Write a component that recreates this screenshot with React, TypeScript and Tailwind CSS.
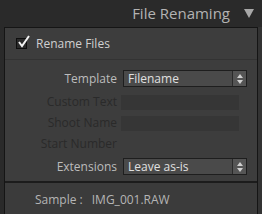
export default function App() {
  const font = { fontFamily: '"Open Sans", "Liberation Sans", sans-serif' }
  return (
    <div className="w-[262px] h-[214px] overflow-hidden bg-[#2a2a2a] flex flex-col" style={font}>
      <div className="h-[27px] flex items-center justify-end pr-[8px] shrink-0">
        <span className="text-[15px] text-[#b3b3b3] leading-none">File Renaming</span>
        <svg width="10" height="9" viewBox="0 0 10 9" className="ml-[14px]">
          <path d="M0 0 H10 L5 9 Z" fill="#a8a8a8" />
        </svg>
      </div>
      <div className="flex flex-1">
        <div className="ml-[4px] w-[254px] border-l border-t border-r border-[#151515] bg-[#3d3d3d] flex flex-col">
          <div className="h-[32px] flex items-center pl-[11px] border-b border-[#333333] shrink-0">
            <div className="relative w-[11px] h-[11px] border border-[#0e0e0e] bg-[#2a2a2a]">
              <svg width="14" height="14" viewBox="0 0 14 14" className="absolute left-[0px] top-[-4px]">
                <path d="M2 7 L5 11 L12 1" stroke="#f2f2f2" strokeWidth="2" fill="none" />
              </svg>
            </div>
            <span className="ml-[9px] text-[12px] text-[#d0d0d0]">Rename Files</span>
          </div>
          <div className="flex flex-col pt-[10px] pb-[6px] shrink-0">
            <div className="flex items-center h-[17px]">
              <span className="w-[112px] text-right text-[12px] text-[#bcbcbc]">Template</span>
              <div className="ml-[6px] w-[124px] h-[17px] border border-[#1e1e1e] bg-[#4a4a4a] flex">
                <span className="flex-1 pl-[4px] text-[12px] leading-[15px] text-[#e0e0e0]">Filename</span>
                <div className="w-[14px] border-l border-[#2a2a2a] bg-[#555555] flex items-center justify-center">
                  <svg width="6" height="10" viewBox="0 0 6 10">
                    <path d="M0 4 L3 0 L6 4 Z M0 6 L3 10 L6 6 Z" fill="#cfcfcf" />
                  </svg>
                </div>
              </div>
            </div>
            <div className="flex items-center h-[16px] mt-[7px]">
              <span className="w-[112px] text-right text-[12px] text-[#2a2a2a]">Custom Text</span>
              <div className="ml-[4px] w-[118px] h-[15px] bg-[#363636]" />
            </div>
            <div className="flex items-center h-[16px] mt-[5px]">
              <span className="w-[112px] text-right text-[12px] text-[#2a2a2a]">Shoot Name</span>
              <div className="ml-[4px] w-[118px] h-[15px] bg-[#363636]" />
            </div>
            <div className="flex items-center h-[16px] mt-[5px]">
              <span className="w-[112px] text-right text-[12px] text-[#2a2a2a]">Start Number</span>
            </div>
            <div className="flex items-center h-[17px] mt-[6px]">
              <span className="w-[112px] text-right text-[12px] text-[#bcbcbc]">Extensions</span>
              <div className="ml-[6px] w-[124px] h-[17px] border border-[#1e1e1e] bg-[#4a4a4a] flex">
                <span className="flex-1 pl-[4px] text-[12px] leading-[15px] text-[#e0e0e0]">Leave as-is</span>
                <div className="w-[14px] border-l border-[#2a2a2a] bg-[#555555] flex items-center justify-center">
                  <svg width="6" height="10" viewBox="0 0 6 10">
                    <path d="M0 4 L3 0 L6 4 Z M0 6 L3 10 L6 6 Z" fill="#cfcfcf" />
                  </svg>
                </div>
              </div>
            </div>
          </div>
          <div className="border-t-2 border-[#1c1c1c] flex-1 bg-[#3b3b3b] pt-[3px] pl-[30px]">
            <span className="text-[12px] text-[#b5b5b5]">Sample :</span>
            <span className="ml-[9px] text-[12px] text-[#b5b5b5]">IMG_001.RAW</span>
          </div>
        </div>
        <div className="flex-1 bg-[#333333]" />
      </div>
    </div>
  )
}
